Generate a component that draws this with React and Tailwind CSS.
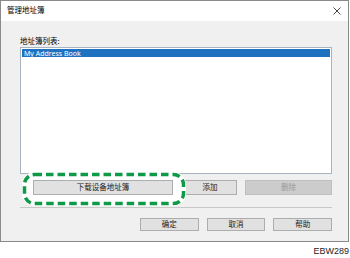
export default function App() {
  const btn = 'h-[15px] flex items-center justify-center border border-[#adadad] bg-[#e1e1e1] text-[7.5px] leading-none text-[#1a1a1a]'

  return (
    <div className="w-[350px] h-[258px] bg-white font-[Noto_Sans,Noto_Sans_CJK_SC,sans-serif]">
      {/* 窗口 */}
      <div className="w-[349px] h-[242px] border border-[#8a8a8a] bg-[#f0f0f0] flex flex-col">
        <div className="h-[20px] bg-white flex items-center justify-between pl-[6px] pr-[5px]">
          <span className="text-[7.5px] leading-none text-black">管理地址簿</span>
          <svg width="8" height="8" viewBox="0 0 8 8" className="mr-[2px]">
            <path d="M0.5 0.5L7.5 7.5M7.5 0.5L0.5 7.5" stroke="#333" strokeWidth="0.9" />
          </svg>
        </div>

        <div className="flex flex-col pl-[19px] pr-[16px] pt-[15px]">
          <span className="text-[7.5px] leading-[10px] text-black mb-[1px]">地址簿列表:</span>
          <div className="w-[312px] h-[127px] border border-[#a9b4c2] bg-white p-[1px]">
            <div className="h-[8px] bg-[#1e72bf] flex items-center pl-[2px] text-[7px] leading-none text-white">My Address Book</div>
          </div>

          {/* 按钮行 */}
          <div className="relative flex mt-[6px] h-[16px]">
            <svg width="164" height="34" viewBox="0 0 164 34" className="absolute left-[2px] top-[-8px]">
              <rect x="2.5" y="2.5" width="159" height="29" rx="10" fill="white" stroke="white" strokeWidth="5" />
              <rect x="2.5" y="2.5" width="159" height="29" rx="10" fill="white" stroke="#0f9a48" strokeWidth="3.5" strokeDasharray="7.5 4" />
            </svg>
            <div className={`${btn} relative ml-[13px] w-[140px]`}>下载设备地址簿</div>
            <div className={`${btn} ml-[10px] w-[54px]`}>添加</div>
            <div className="h-[15px] w-[87px] ml-[8px] flex items-center justify-center border border-[#bfbfbf] bg-[#cccccc] text-[7.5px] leading-none text-[#9a9a9a]">删除</div>
          </div>

          <div className="mt-[11px] h-[1px] w-[312px] bg-[#c8c8c8]" />

          <div className="flex mt-[10px] ml-[120px] gap-[8px]">
            <div className={`${btn} w-[60px] !h-[13px]`}>确定</div>
            <div className={`${btn} w-[60px] !h-[13px]`}>取消</div>
            <div className={`${btn} w-[60px] !h-[13px]`}>帮助</div>
          </div>
        </div>
      </div>

      <div className="flex justify-end pr-[1px] mt-[5px]">
        <span className="text-[9px] leading-none text-[#222] font-[Liberation_Sans,Arial,sans-serif]">EBW289</span>
      </div>
    </div>
  )
}
